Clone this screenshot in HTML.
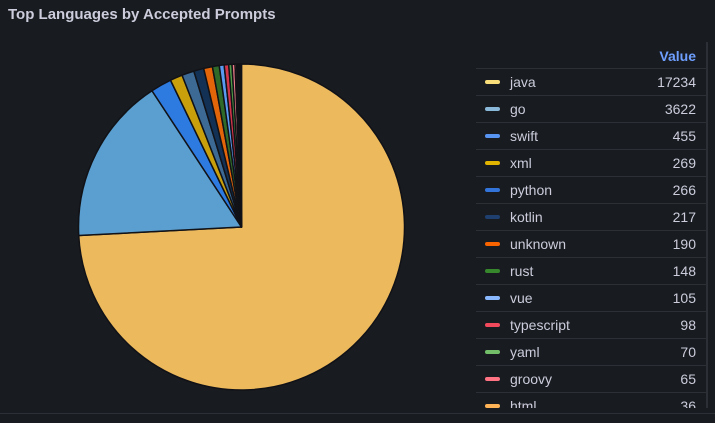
<!DOCTYPE html>
<html><head><meta charset="utf-8"><style>
body{margin:0;width:715px;height:423px;background:#181b1f;overflow:hidden;font-family:"Liberation Sans",sans-serif;position:relative}
.title{position:absolute;left:8px;top:6px;font-size:15px;font-weight:bold;color:#ccccdc}
.tbl{position:absolute;left:476px;top:42px;width:230px;height:366px;overflow:hidden}
.hdr{height:27px;border-bottom:1px solid #2c2f35;text-align:right;color:#6e9fff;font-size:14px;font-weight:bold;line-height:29px;padding-right:10px;box-sizing:border-box}
.row{height:27px;border-bottom:1px solid #2c2f35;position:relative;color:#ccccdc;font-size:14px;line-height:26px;box-sizing:border-box}
.row i{position:absolute;left:9px;top:11px;width:15px;height:4px;border-radius:2px}
.row span{position:absolute;left:34px}
.row b{position:absolute;right:10px;font-weight:normal}
.sb{position:absolute;left:706px;top:42px;width:2px;height:366px;background:#2c2f35}
.bot{position:absolute;left:0;top:413px;width:715px;height:1px;background:#2c2f35}
</style></head><body>
<div class="title">Top Languages by Accepted Prompts</div>
<svg width="480" height="423" style="position:absolute;left:0;top:0" id="pie"></svg>
<div class="tbl">
<div class="hdr">Value</div>
<div class="row"><i style="background:#fade7a"></i><span>java</span><b>17234</b></div>
<div class="row"><i style="background:#8ab8d8"></i><span>go</span><b>3622</b></div>
<div class="row"><i style="background:#5794f2"></i><span>swift</span><b>455</b></div>
<div class="row"><i style="background:#e0b400"></i><span>xml</span><b>269</b></div>
<div class="row"><i style="background:#3274d9"></i><span>python</span><b>266</b></div>
<div class="row"><i style="background:#1f3f6e"></i><span>kotlin</span><b>217</b></div>
<div class="row"><i style="background:#fa6400"></i><span>unknown</span><b>190</b></div>
<div class="row"><i style="background:#37872d"></i><span>rust</span><b>148</b></div>
<div class="row"><i style="background:#8ab8ff"></i><span>vue</span><b>105</b></div>
<div class="row"><i style="background:#f2495c"></i><span>typescript</span><b>98</b></div>
<div class="row"><i style="background:#73bf69"></i><span>yaml</span><b>70</b></div>
<div class="row"><i style="background:#ff7383"></i><span>groovy</span><b>65</b></div>
<div class="row"><i style="background:#ffb357"></i><span>html</span><b>36</b></div>
</div>
<div class="sb"></div>
<div class="bot"></div>
<script>
var d=[[17234,"#ecb95c"],[3622,"#5a9fcf"],[455,"#2d7be0"],[269,"#c9a00c"],[266,"#3c6a95"],[217,"#133154"],[190,"#e2650a"],[148,"#2f6a28"],[105,"#5a9af0"],[98,"#d2344a"],[70,"#4f9a46"],[65,"#e87b87"],[36,"#e89a5a"],[30,"#8a6a4a"],[25,"#b04050"],[20,"#9a8a6a"],[15,"#7a5a6a"],[12,"#a06060"]];
var t=0;d.forEach(function(x){t+=x[0]});
var jf=267/360, scale=(t-17234)/(17234/jf-17234);
d.forEach(function(x,i){if(i>0)x[0]/=scale});t=17234/jf;
var cx=241.5,cy=227,r=163,a=0,s="";
d.forEach(function(x){var b=a+x[0]/t*2*Math.PI;
var x1=cx+r*Math.sin(a),y1=cy-r*Math.cos(a),x2=cx+r*Math.sin(b),y2=cy-r*Math.cos(b);
s+='<path d="M'+cx+' '+cy+'L'+x1+' '+y1+'A'+r+' '+r+' 0 '+((b-a)>Math.PI?1:0)+' 1 '+x2+' '+y2+'Z" fill="'+x[1]+'" stroke="#111217" stroke-width="1.5" stroke-linejoin="round"/>';a=b;});
document.getElementById("pie").innerHTML=s;
</script>
</body></html>
